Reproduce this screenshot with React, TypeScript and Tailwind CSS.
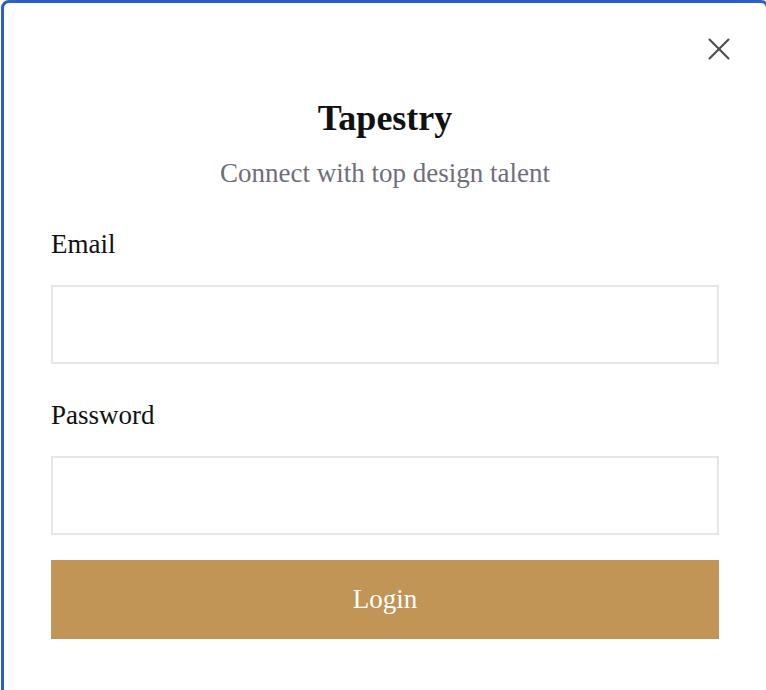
import { X } from "lucide-react";

const serif = "font-['Liberation_Serif','Times_New_Roman',serif]";

export default function App() {
  return (
    <div className={`h-[690px] w-[766px] overflow-hidden bg-white ${serif}`}>
      <div className="relative ml-px h-[760px] w-[768px] rounded-lg border-[3px] border-[#2b5fc7] bg-white">
        <button
          type="button"
          aria-label="Close"
          className="absolute top-[27px] right-[28px] text-[#4d4d4d]"
        >
          <X className="size-[38px]" strokeWidth={1.3} />
        </button>

        <div className="px-[47px] pt-[93px]">
          <h1 className="text-center text-[36px] leading-[44px] font-semibold text-[#111111]">
            Tapestry
          </h1>
          <p className="mt-[17px] text-center text-[27px] leading-[32px] text-[#6e6e7a]">
            Connect with top design talent
          </p>

          <form className="mt-[39px] flex flex-col">
            <label className="text-[27px] leading-[32px] text-[#111111]">Email</label>
            <input
              type="email"
              className="mt-[25px] h-[79px] w-full border-2 border-[#e6e6e6] bg-white px-4 text-[22px] outline-none"
            />

            <label className="mt-[35px] text-[27px] leading-[32px] text-[#111111]">
              Password
            </label>
            <input
              type="password"
              className="mt-[25px] h-[79px] w-full border-2 border-[#e6e6e6] bg-white px-4 text-[22px] outline-none"
            />

            <button
              type="button"
              className="mt-[25px] h-[79px] w-full bg-[#c09556] text-[27px] text-white"
            >
              Login
            </button>
          </form>
        </div>
      </div>
    </div>
  );
}
